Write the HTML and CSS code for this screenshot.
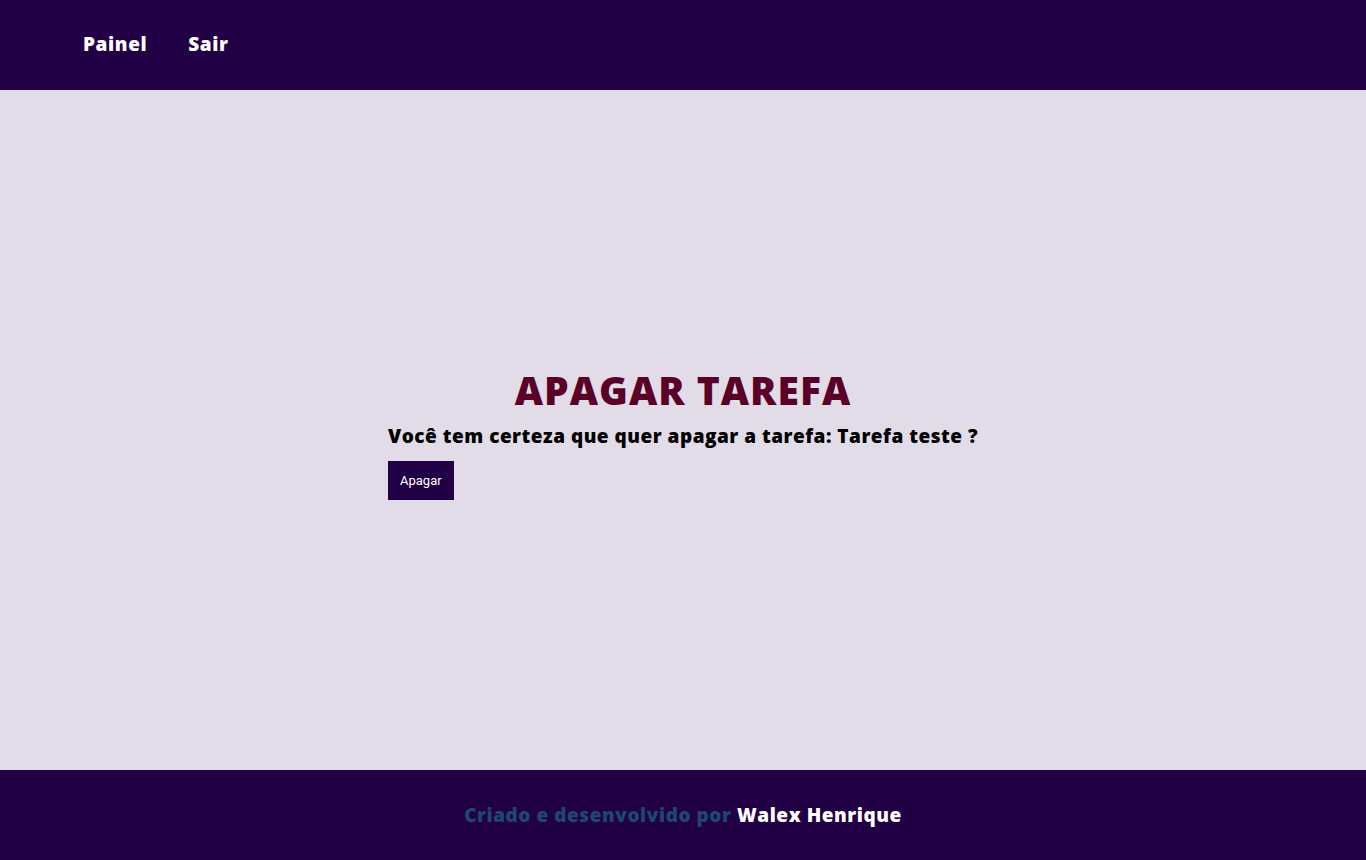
FILE: index.html
```html
<!DOCTYPE html>
<html lang="pt-BR">
<head>
<meta charset="utf-8">
<title>Apagar tarefa</title>
<link rel="stylesheet" href="styles.css">
</head>
<body>
<header class="topbar">
  <nav class="nav">
    <a class="nav-link" href="#">Painel</a>
    <a class="nav-link" href="#">Sair</a>
  </nav>
</header>
<main class="main">
  <section class="confirm">
    <h1 class="confirm-title">APAGAR TAREFA</h1>
    <p class="confirm-text">Você tem certeza que quer apagar a tarefa: Tarefa teste ?</p>
    <div class="confirm-actions">
      <button class="btn" type="button">Apagar</button>
    </div>
  </section>
</main>
<footer class="footer">
  <p class="footer-text">Criado e desenvolvido por <span class="footer-name">Walex Henrique</span></p>
</footer>
</body>
</html>
```
FILE: styles.css
```css
* { box-sizing: border-box; }
html, body { margin: 0; padding: 0; }
body {
  font-family: "Open Sans", "Liberation Sans", sans-serif;
  background: #e1dce8;
  min-height: 860px;
  display: flex;
  flex-direction: column;
}
.topbar {
  height: 90px;
  background: #220046;
  display: flex;
  align-items: center;
  padding-left: 83px;
  padding-bottom: 2px;
}
.nav { display: flex; gap: 41px; }
.nav-link {
  color: #ffffff;
  text-decoration: none;
  font-weight: 800;
  font-size: 19px;
  letter-spacing: 0.6px;
}
.main {
  height: 680px;
  display: flex;
  align-items: center;
  justify-content: center;
  padding-top: 6px;
}
.confirm { display: flex; flex-direction: column; }
.confirm-title {
  margin: 0;
  text-align: center;
  color: #5b0027;
  font-size: 39px;
  font-weight: 800;
  line-height: 46px;
  letter-spacing: 1px;
}
.confirm-text {
  margin: 10px 0 12px;
  color: #000;
  font-size: 19px;
  font-weight: 800;
  line-height: 26px;
  letter-spacing: 0.5px;
}
.confirm-actions { display: flex; }
.btn {
  background: #220046;
  color: #fff;
  border: none;
  font-family: Roboto, "Liberation Sans", sans-serif;
  font-size: 13px;
  height: 39px;
  padding: 0 12px;
  cursor: pointer;
}
.footer {
  height: 90px;
  background: #220046;
  display: flex;
  align-items: center;
  justify-content: center;
}
.footer-text {
  margin: 0;
  color: #1e476d;
  font-weight: 800;
  font-size: 19px;
  letter-spacing: 0.55px;
}
.footer-name { color: #ffffff; }
```
